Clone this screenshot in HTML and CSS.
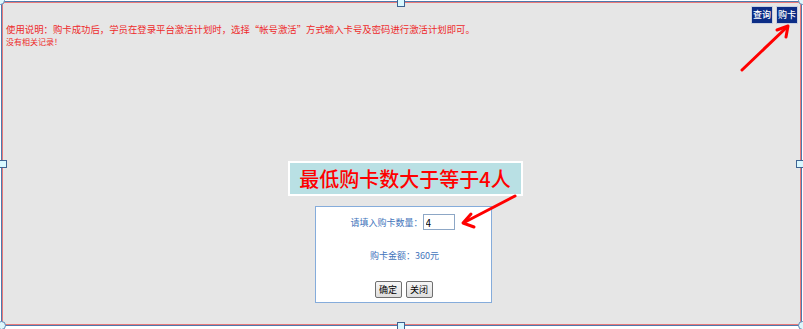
FILE: index.html
```
<!DOCTYPE html>
<html lang="zh-CN">
<head>
    <meta charset="UTF-8">
    <title>购卡</title>
    <link rel="stylesheet" href="styles.css">
</head>
<body>
    <div class="frame">
        <div class="canvas">
            <div class="top">
                <div class="notice">
                    <p class="usage">使用说明：购卡成功后，学员在登录平台激活计划时，选择“帐号激活”方式输入卡号及密码进行激活计划即可。</p>
                    <p class="empty">没有相关记录！</p>
                </div>
                <div class="tools">
                    <button class="navy">查询</button>
                    <button class="navy">购卡</button>
                </div>
            </div>
            <div class="stage">
                <div class="tip">最低购卡数大于等于4人</div>
                <div class="dialog">
                    <div class="row">请填入购卡数量：<input type="text" class="qty" value="4"></div>
                    <div class="row">购卡金额：360元</div>
                    <div class="row actions">
                        <button class="plain">确定</button>
                        <button class="plain">关闭</button>
                    </div>
                </div>
            </div>
        </div>
        <span class="dot tl"></span>
        <span class="dot tr"></span>
        <span class="dot bl"></span>
        <span class="dot br"></span>
        <span class="grip gt"></span>
        <span class="grip gb"></span>
        <span class="grip gl"></span>
        <span class="grip gr"></span>
    </div>
    <!-- 标注箭头 -->
    <svg class="arrows" width="803" height="329" viewBox="0 0 803 329">
        <g stroke="#ff0000" stroke-width="3" fill="none" stroke-linecap="round" stroke-linejoin="round">
            <line x1="742" y1="70" x2="786" y2="28"/>
            <polyline points="777,30 788,26 786,37"/>
            <line x1="515" y1="196" x2="465" y2="222"/>
            <polyline points="471,214 463,223 474,227"/>
        </g>
    </svg>
</body>
</html>
```

FILE: styles.css
```
body {
    margin: 0;
    width: 803px;
    height: 329px;
    background: #ffffff;
    font-family: "Noto Sans CJK SC", "Liberation Sans", sans-serif;
    position: relative;
    overflow: hidden;
}

.frame {
    position: relative;
    margin: 1px 0 0 1px;
    width: 801px;
    height: 325px;
    box-sizing: border-box;
    border: 1px solid #4d79ad;
}

.canvas {
    height: 100%;
    box-sizing: border-box;
    border: 1px solid #e87a7a;
    background: #e6e6e6;
}

.top {
    display: flex;
    justify-content: space-between;
    padding: 3px 2px 0 3px;
}

.notice {
    margin-top: 17px;
    color: #ee2a2a;
}

.notice p {
    margin: 0;
}

.usage {
    font-size: 9.4px;
    line-height: 13px;
}

.empty {
    font-size: 8px;
    line-height: 12px;
}

.tools {
    display: flex;
    gap: 3px;
    height: 18px;
}

.navy {
    width: 22px;
    height: 18px;
    padding: 0;
    border: 1px solid #c8cfe0;
    background: #0c2d86;
    color: #ffffff;
    font-family: inherit;
    font-size: 9px;
    font-weight: 500;
    line-height: 16px;
}

.stage {
    display: flex;
    flex-direction: column;
    align-items: center;
    margin-top: 113px;
    padding-left: 4px;
}

.tip {
    box-sizing: border-box;
    width: 235px;
    height: 35px;
    margin-left: 3px;
    border: 2px solid #ffffff;
    background: #b9e0e4;
    color: #ff0000;
    font-size: 20px;
    font-weight: 500;
    line-height: 31px;
    text-align: center;
}

.dialog {
    box-sizing: border-box;
    width: 177px;
    height: 97px;
    margin-top: 10px;
    border: 1px solid #85acdb;
    background: #ffffff;
    color: #4274bb;
    font-size: 9px;
}

.row {
    display: flex;
    justify-content: center;
    align-items: center;
}

.row:nth-child(1) {
    height: 16px;
    margin-top: 7px;
    padding-right: 2px;
}

.row:nth-child(2) {
    margin-top: 18px;
    height: 14px;
    padding-left: 2px;
}

.qty {
    box-sizing: border-box;
    width: 32px;
    height: 16px;
    padding: 0 2px;
    border: 1px solid #8da7c6;
    font-family: inherit;
    font-size: 10px;
    color: #000000;
}

.actions {
    margin-top: 19px;
    gap: 4px;
}

.plain {
    width: 27px;
    height: 17px;
    padding: 0;
    border: 1px solid #6f6f6f;
    border-radius: 2px;
    background: linear-gradient(#f6f6f6, #dedede);
    font-family: inherit;
    font-size: 9px;
    color: #000000;
    line-height: 15px;
}

.dot {
    position: absolute;
    width: 9px;
    height: 9px;
    box-sizing: border-box;
    border: 1px solid #5b86b5;
    border-radius: 50%;
    background: #dff7fb;
}

.tl { left: -6px; top: -6px; }
.tr { right: -6px; top: -6px; }
.bl { left: -5px; bottom: -5px; }
.br { right: -6px; bottom: -5px; }

.grip {
    position: absolute;
    width: 8px;
    height: 8px;
    box-sizing: border-box;
    border: 1px solid #3e6392;
    background: #d9f8ff;
}

.gt { left: 395px; top: -3px; }
.gb { left: 395px; bottom: -5px; }
.gl { left: -3px; top: 158px; }
.gr { right: -3px; top: 158px; }

.arrows {
    position: absolute;
    left: 0;
    top: 0;
}
```
